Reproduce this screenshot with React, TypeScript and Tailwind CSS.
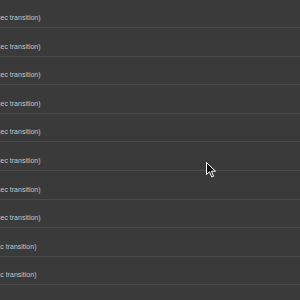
const rows = [
  '(0.5 sec transition)',
  '(0.5 sec transition)',
  '(0.5 sec transition)',
  '(0.5 sec transition)',
  '(0.5 sec transition)',
  '(0.5 sec transition)',
  '(0.5 sec transition)',
  '(0.5 sec transition)',
  '(1.25 sec transition)',
  '(1.25 sec transition)',
];

export default function App() {
  return (
    <div className="relative h-[300px] w-[300px] overflow-hidden bg-[#3a3a3a] font-['Liberation_Sans',Arial,sans-serif]">
      <div className="-mt-[0.6px] flex flex-col">
        {rows.map((label, i) => (
          <div key={i} className="flex h-[28.6px] items-end border-b border-[#4b4b4b] pb-[5px]">
            <span
              className={
                i < 8
                  ? 'ml-[-17px] whitespace-nowrap text-[7px] leading-[8px] text-[#c4c4c4]'
                  : 'ml-[-25px] whitespace-nowrap text-[7px] leading-[8px] text-[#c4c4c4]'
              }
            >
              {label}
            </span>
          </div>
        ))}
      </div>

      {/* mouse pointer */}
      <svg className="absolute left-[206px] top-[162px]" width="11" height="16" viewBox="0 0 11 16">
        <path d="M0.5 0.5 L0.5 12.5 L3.5 9.8 L5.8 15 L7.6 14.2 L5.4 9.2 L9.5 9.2 Z" fill="#111" stroke="#fff" strokeWidth="1" strokeLinejoin="round" />
      </svg>
    </div>
  );
}
